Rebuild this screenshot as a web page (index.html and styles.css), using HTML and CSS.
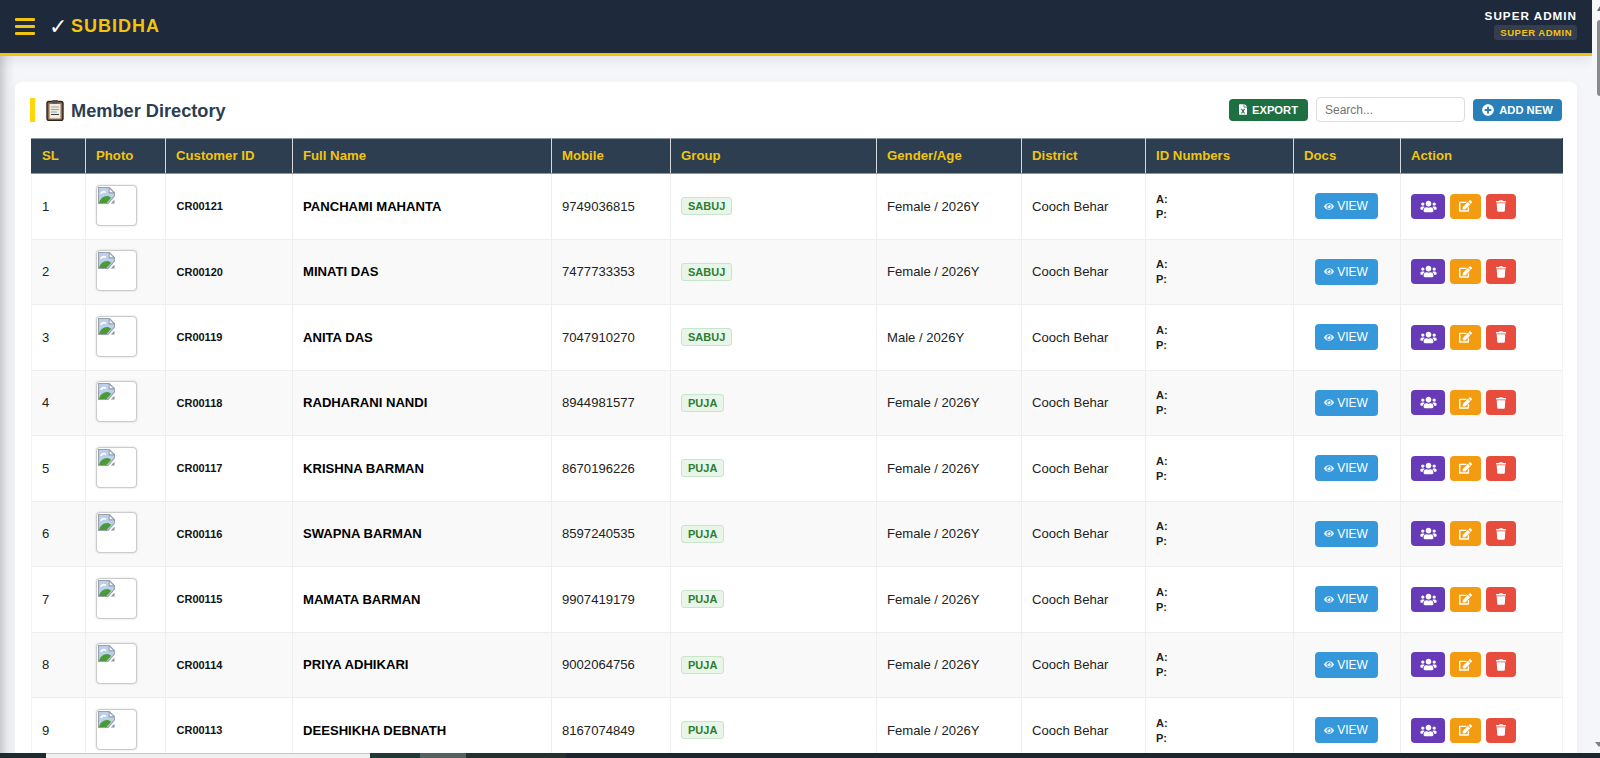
FILE: index.html
```html
<!DOCTYPE html>
<html lang="en">
<head>
<meta charset="utf-8">
<title>Subidha - Member Directory</title>
<link rel="stylesheet" href="styles.css">
</head>
<body>
<svg class="defs" aria-hidden="true">
  <symbol id="i-users" viewBox="0 0 640 512"><path d="M96 224c35.3 0 64-28.7 64-64s-28.7-64-64-64-64 28.7-64 64 28.7 64 64 64zm448 0c35.3 0 64-28.7 64-64s-28.7-64-64-64-64 28.7-64 64 28.7 64 64 64zm32 32h-64c-17.6 0-33.5 7.1-45.1 18.6 40.3 22.1 68.9 62 75.1 109.4h66c17.7 0 32-14.3 32-32v-32c0-35.3-28.7-64-64-64zm-256 0c61.9 0 112-50.1 112-112S381.9 32 320 32 208 82.1 208 144s50.1 112 112 112zm76.8 32h-8.3c-20.8 10-43.9 16-68.5 16s-47.6-6-68.5-16h-8.3C179.6 288 128 339.6 128 403.2V432c0 26.5 21.5 48 48 48h288c26.5 0 48-21.5 48-48v-28.8c0-63.6-51.6-115.2-115.2-115.2zm-223.7-13.4C161.5 263.1 145.6 256 128 256H64c-35.3 0-64 28.7-64 64v32c0 17.7 14.3 32 32 32h65.9c6.3-47.4 34.9-87.3 75.2-109.4z"/></symbol>
  <symbol id="i-edit" viewBox="0 0 576 512"><path d="M402.6 83.2l90.2 90.2c3.8 3.8 3.8 10 0 13.8L274.4 405.6l-92.8 10.3c-12.4 1.4-22.9-9.1-21.5-21.5l10.3-92.8L388.8 83.2c3.8-3.8 10-3.8 13.8 0zm162-22.9l-48.8-48.8c-15.2-15.2-39.9-15.2-55.2 0l-35.4 35.4c-3.8 3.8-3.8 10 0 13.8l90.2 90.2c3.8 3.8 10 3.8 13.8 0l35.4-35.4c15.2-15.3 15.2-40 0-55.2zM384 346.2V448H64V128h229.8c3.2 0 6.2-1.3 8.5-3.5l40-40c7.6-7.6 2.2-20.5-8.5-20.5H48C21.5 64 0 85.5 0 112v352c0 26.5 21.5 48 48 48h352c26.5 0 48-21.5 48-48V306.2c0-10.7-12.9-16-20.5-8.5l-40 40c-2.2 2.3-3.5 5.3-3.5 8.5z"/></symbol>
  <symbol id="i-trash" viewBox="0 0 448 512"><path d="M432 32H312l-9.4-18.7A24 24 0 0 0 281.1 0H166.8a23.72 23.72 0 0 0-21.4 13.3L136 32H16A16 16 0 0 0 0 48v32a16 16 0 0 0 16 16h416a16 16 0 0 0 16-16V48a16 16 0 0 0-16-16zM53.2 467a48 48 0 0 0 47.9 45h245.8a48 48 0 0 0 47.9-45L416 128H32z"/></symbol>
  <symbol id="i-eye" viewBox="0 0 576 512"><path d="M572.52 241.4C518.29 135.59 410.93 64 288 64S57.68 135.64 3.48 241.41a32.35 32.35 0 0 0 0 29.19C57.71 376.41 165.07 448 288 448s230.32-71.64 284.52-177.41a32.35 32.35 0 0 0 0-29.19zM288 400a144 144 0 1 1 144-144 143.93 143.93 0 0 1-144 144zm0-240a95.31 95.31 0 0 0-25.31 3.79 47.85 47.85 0 0 1-66.9 66.9A95.78 95.78 0 1 0 288 160z"/></symbol>
  <symbol id="i-plus" viewBox="0 0 512 512"><path d="M256 8C119 8 8 119 8 256s111 248 248 248 248-111 248-248S393 8 256 8zm144 276c0 6.6-5.4 12-12 12h-92v92c0 6.6-5.4 12-12 12h-56c-6.6 0-12-5.4-12-12v-92h-92c-6.6 0-12-5.4-12-12v-56c0-6.6 5.4-12 12-12h92v-92c0-6.6 5.4-12 12-12h56c6.6 0 12 5.4 12 12v92h92c6.6 0 12 5.4 12 12v56z"/></symbol>
  <symbol id="i-excel" viewBox="0 0 384 512"><path d="M224 136V0H24C10.7 0 0 10.7 0 24v464c0 13.3 10.7 24 24 24h336c13.3 0 24-10.7 24-24V160H248c-13.2 0-24-10.8-24-24zm60.1 106.5L224 336l60.1 93.5c5.1 8-.6 18.5-10.1 18.5h-34.9c-4.4 0-8.5-2.4-10.6-6.3C208.9 405.5 192 373 192 373c-6.4 14.8-10 20-36.6 68.8-2.1 3.9-6.1 6.3-10.5 6.3H110c-9.5 0-15.2-10.5-10.1-18.5l60.3-93.5-60.3-93.5c-5.2-8 .6-18.5 10.1-18.5h34.8c4.4 0 8.5 2.4 10.6 6.3 26.1 48.8 20 33.6 36.6 68.5 0 0 6.1-11.7 36.6-68.5 2.1-3.9 6.2-6.3 10.6-6.3H274c9.5-.1 15.2 10.4 10.1 18.4zM384 121.9v6.1H256V0h6.1c6.4 0 12.5 2.5 17 7l97.9 98c4.5 4.5 7 10.6 7 16.9z"/></symbol>
  <symbol id="i-broken" viewBox="0 0 16 16">
    <path d="M.5.5h10l5 5v3L9.500 15.500h-9z" fill="#bccfeb" stroke="#98a1ac"/>
    <path d="M10.500.5v5h5z" fill="#f4f6f8" stroke="#98a1ac"/>
    <path d="M1 15c.8-4 4-6.800 8.500-6.500l3 1.500-4.500 5z" fill="#4a9a35"/>
    <path d="M2.500 6.500c1-2 3-2.500 5-1.500" stroke="#fff" stroke-width="1.500" fill="none"/>
    <path d="M12 15.500l3.500-3.500v3.500z" fill="#8a939e"/>
  </symbol>
</svg>

<div class="app">
  <header class="topbar">
    <div class="brand">
      <span class="burger"><i></i><i></i><i></i></span>
      <span class="check">✓</span>
      <span class="logo">SUBIDHA</span>
    </div>
    <div class="user">
      <div class="user-name">SUPER ADMIN</div>
      <div class="user-role">SUPER ADMIN</div>
    </div>
  </header>

  <main class="content">
    <section class="card">
      <div class="toolbar">
        <h1 class="title">
          <svg class="clip" viewBox="0 0 18 22" aria-hidden="true">
            <rect x="1" y="2.500" width="16" height="19" rx="2" fill="#8f6d4d" stroke="#2b2320" stroke-width="1.400"/>
            <rect x="3.500" y="5" width="11" height="14.500" fill="#f1ebe0"/>
            <path d="M5 8h8M5 10.500h8M5 13h6" stroke="#9aa3ad" stroke-width="1"/>
            <path d="M5 15.500h8" stroke="#3d434a" stroke-width="1"/>
            <rect x="6" y="1" width="6" height="3.500" rx="1" fill="#55504c"/>
          </svg>
          Member Directory
        </h1>
        <div class="tools">
          <button class="btn btn-export"><svg class="ico-excel"><use href="#i-excel"/></svg>EXPORT</button>
          <input class="search" type="text" placeholder="Search...">
          <button class="btn btn-add"><svg class="ico-plus"><use href="#i-plus"/></svg>ADD NEW</button>
        </div>
      </div>

      <table class="members">
        <thead>
          <tr>
            <th class="c-sl">SL</th><th class="c-photo">Photo</th><th class="c-cid">Customer ID</th><th class="c-name">Full Name</th><th class="c-mobile">Mobile</th><th class="c-group">Group</th><th class="c-gender">Gender/Age</th><th class="c-district">District</th><th class="c-ids">ID Numbers</th><th class="c-docs">Docs</th><th class="c-action">Action</th>
          </tr>
        </thead>
        <tbody>
          <tr><td>1</td><td><span class="photo"><svg><use href="#i-broken"/></svg></span></td><td class="cid">CR00121</td><td class="name">PANCHAMI MAHANTA</td><td>9749036815</td><td><span class="tag">SABUJ</span></td><td>Female / 2026Y</td><td>Cooch Behar</td><td class="ids">A:<br>P:</td><td class="docs"><a class="view"><svg><use href="#i-eye"/></svg>VIEW</a></td><td><div class="acts"><a class="act a-users"><svg><use href="#i-users"/></svg></a><a class="act a-edit"><svg><use href="#i-edit"/></svg></a><a class="act a-del"><svg><use href="#i-trash"/></svg></a></div></td></tr>
          <tr><td>2</td><td><span class="photo"><svg><use href="#i-broken"/></svg></span></td><td class="cid">CR00120</td><td class="name">MINATI DAS</td><td>7477733353</td><td><span class="tag">SABUJ</span></td><td>Female / 2026Y</td><td>Cooch Behar</td><td class="ids">A:<br>P:</td><td class="docs"><a class="view"><svg><use href="#i-eye"/></svg>VIEW</a></td><td><div class="acts"><a class="act a-users"><svg><use href="#i-users"/></svg></a><a class="act a-edit"><svg><use href="#i-edit"/></svg></a><a class="act a-del"><svg><use href="#i-trash"/></svg></a></div></td></tr>
          <tr><td>3</td><td><span class="photo"><svg><use href="#i-broken"/></svg></span></td><td class="cid">CR00119</td><td class="name">ANITA DAS</td><td>7047910270</td><td><span class="tag">SABUJ</span></td><td>Male / 2026Y</td><td>Cooch Behar</td><td class="ids">A:<br>P:</td><td class="docs"><a class="view"><svg><use href="#i-eye"/></svg>VIEW</a></td><td><div class="acts"><a class="act a-users"><svg><use href="#i-users"/></svg></a><a class="act a-edit"><svg><use href="#i-edit"/></svg></a><a class="act a-del"><svg><use href="#i-trash"/></svg></a></div></td></tr>
          <tr><td>4</td><td><span class="photo"><svg><use href="#i-broken"/></svg></span></td><td class="cid">CR00118</td><td class="name">RADHARANI NANDI</td><td>8944981577</td><td><span class="tag">PUJA</span></td><td>Female / 2026Y</td><td>Cooch Behar</td><td class="ids">A:<br>P:</td><td class="docs"><a class="view"><svg><use href="#i-eye"/></svg>VIEW</a></td><td><div class="acts"><a class="act a-users"><svg><use href="#i-users"/></svg></a><a class="act a-edit"><svg><use href="#i-edit"/></svg></a><a class="act a-del"><svg><use href="#i-trash"/></svg></a></div></td></tr>
          <tr><td>5</td><td><span class="photo"><svg><use href="#i-broken"/></svg></span></td><td class="cid">CR00117</td><td class="name">KRISHNA BARMAN</td><td>8670196226</td><td><span class="tag">PUJA</span></td><td>Female / 2026Y</td><td>Cooch Behar</td><td class="ids">A:<br>P:</td><td class="docs"><a class="view"><svg><use href="#i-eye"/></svg>VIEW</a></td><td><div class="acts"><a class="act a-users"><svg><use href="#i-users"/></svg></a><a class="act a-edit"><svg><use href="#i-edit"/></svg></a><a class="act a-del"><svg><use href="#i-trash"/></svg></a></div></td></tr>
          <tr><td>6</td><td><span class="photo"><svg><use href="#i-broken"/></svg></span></td><td class="cid">CR00116</td><td class="name">SWAPNA BARMAN</td><td>8597240535</td><td><span class="tag">PUJA</span></td><td>Female / 2026Y</td><td>Cooch Behar</td><td class="ids">A:<br>P:</td><td class="docs"><a class="view"><svg><use href="#i-eye"/></svg>VIEW</a></td><td><div class="acts"><a class="act a-users"><svg><use href="#i-users"/></svg></a><a class="act a-edit"><svg><use href="#i-edit"/></svg></a><a class="act a-del"><svg><use href="#i-trash"/></svg></a></div></td></tr>
          <tr><td>7</td><td><span class="photo"><svg><use href="#i-broken"/></svg></span></td><td class="cid">CR00115</td><td class="name">MAMATA BARMAN</td><td>9907419179</td><td><span class="tag">PUJA</span></td><td>Female / 2026Y</td><td>Cooch Behar</td><td class="ids">A:<br>P:</td><td class="docs"><a class="view"><svg><use href="#i-eye"/></svg>VIEW</a></td><td><div class="acts"><a class="act a-users"><svg><use href="#i-users"/></svg></a><a class="act a-edit"><svg><use href="#i-edit"/></svg></a><a class="act a-del"><svg><use href="#i-trash"/></svg></a></div></td></tr>
          <tr><td>8</td><td><span class="photo"><svg><use href="#i-broken"/></svg></span></td><td class="cid">CR00114</td><td class="name">PRIYA ADHIKARI</td><td>9002064756</td><td><span class="tag">PUJA</span></td><td>Female / 2026Y</td><td>Cooch Behar</td><td class="ids">A:<br>P:</td><td class="docs"><a class="view"><svg><use href="#i-eye"/></svg>VIEW</a></td><td><div class="acts"><a class="act a-users"><svg><use href="#i-users"/></svg></a><a class="act a-edit"><svg><use href="#i-edit"/></svg></a><a class="act a-del"><svg><use href="#i-trash"/></svg></a></div></td></tr>
          <tr><td>9</td><td><span class="photo"><svg><use href="#i-broken"/></svg></span></td><td class="cid">CR00113</td><td class="name">DEESHIKHA DEBNATH</td><td>8167074849</td><td><span class="tag">PUJA</span></td><td>Female / 2026Y</td><td>Cooch Behar</td><td class="ids">A:<br>P:</td><td class="docs"><a class="view"><svg><use href="#i-eye"/></svg>VIEW</a></td><td><div class="acts"><a class="act a-users"><svg><use href="#i-users"/></svg></a><a class="act a-edit"><svg><use href="#i-edit"/></svg></a><a class="act a-del"><svg><use href="#i-trash"/></svg></a></div></td></tr>
        </tbody>
      </table>
    </section>
  </main>
</div>

<div class="scrollbar"><span class="sb-arrow"></span><span class="sb-thumb"></span><span class="sb-arrow-down"></span></div>
<div class="strip"><span class="s1"></span><span class="s2"></span><span class="s3"></span><span class="s4"></span><span class="s5"></span></div>
</body>
</html>
```

FILE: styles.css
```css
* { box-sizing: border-box; }
html, body { margin: 0; height: 100%; overflow: hidden; }
body {
  position: relative;
  width: 1600px;
  height: 758px;
  background: #f4f6f9;
  font-family: "Liberation Sans", Arial, sans-serif;
  color: #212529;
}
.defs { display: none; }

.app { width: 1592px; height: 758px; overflow: hidden; }

.topbar {
  height: 56px;
  background: #1e293b;
  border-bottom: 3px solid #f1c40f;
  box-shadow: 0 4px 12px rgba(0, 0, 0, .08);
  display: flex;
  justify-content: space-between;
  align-items: center;
  padding: 0 15px;
  position: relative;
  z-index: 2;
}
.brand { display: flex; align-items: center; }
.burger { width: 20px; display: flex; flex-direction: column; gap: 4px; margin-right: 14px; }
.burger i { display: block; height: 3px; background: #f1c40f; border-radius: 1px; }
.check { color: #fff; font: bold 22px "DejaVu Sans", sans-serif; width: 22px; }
.logo { color: #f1c40f; font-weight: 700; font-size: 18px; letter-spacing: 1px; }
.user { display: flex; flex-direction: column; align-items: flex-end; gap: 2px; margin-top: -4px; }
.user-name { color: #fff; font-size: 11.700px; font-weight: 700; letter-spacing: 1px; line-height: 14px; }
.user-role {
  color: #f1c40f;
  background: rgba(255, 255, 255, .1);
  font-size: 9.500px;
  font-weight: 700;
  letter-spacing: .5px;
  line-height: 15px;
  padding: 0 5px 0 6px;
  border-radius: 3px;
}

.content {
  height: 702px;
  padding: 26px 15px 0;
  background: linear-gradient(90deg, #c9cbce 0, #e9ebee 8px, #f4f6f9 15px);
}
.card {
  width: 1562px;
  background: #fff;
  border-radius: 6px;
  padding: 15px 15px 0 16px;
  box-shadow: 0 2px 10px rgba(0, 0, 0, .05);
}
.toolbar { height: 41px; display: flex; justify-content: space-between; align-items: flex-start; }
.title {
  margin: 1px 0 0 -1px;
  height: 24px;
  border-left: 5px solid #ffd60a;
  padding: 2px 0 0 11px;
  display: flex;
  align-items: center;
  gap: 7px;
  font-size: 18.200px;
  font-weight: 700;
  color: #2c3e50;
}
.clip { width: 18px; height: 22px; margin-top: -2px; }
.tools { display: flex; align-items: center; gap: 8px; height: 25px; }
.btn {
  border: 0;
  height: 22px;
  border-radius: 4px;
  color: #fff;
  font: 700 11.200px "Liberation Sans", Arial, sans-serif;
  display: inline-flex;
  align-items: center;
  justify-content: center;
  padding: 0;
  fill: #fff;
}
.btn-export { width: 79px; background: #1e6f42; gap: 5px; }
.btn-add { width: 89px; background: #2980b9; gap: 5px; }
.ico-excel { width: 8px; height: 11px; }
.ico-plus { width: 12px; height: 12px; }
.search {
  width: 149px;
  height: 25px;
  border: 1px solid #ddd;
  border-radius: 4px;
  padding: 0 8px;
  font: 12px "Liberation Sans", Arial, sans-serif;
  background: #fff;
}
.search::placeholder { color: #757575; }

.members {
  width: 1531px;
  table-layout: fixed;
  border-collapse: collapse;
  font-size: 13.100px;
}
.members th {
  height: 35px;
  background: #2c3e50;
  color: #f1c40f;
  font-size: 13.200px;
  font-weight: 700;
  text-align: left;
  padding: 0 10px 2px;
  border: 1px solid #d5d9dd;
  border-top-color: #8896a3;
  border-bottom-color: #8896a3;
}
.members th:first-child { border-left-color: #2c3e50; }
.members th:last-child { border-right-color: #2c3e50; }
.c-sl { width: 54px; }
.c-photo { width: 80px; }
.c-cid { width: 127px; }
.c-name { width: 259px; }
.c-mobile { width: 119px; }
.c-group { width: 206px; }
.c-gender { width: 145px; }
.c-district { width: 124px; }
.c-ids { width: 148px; }
.c-docs { width: 107px; }
.c-action { width: 162px; }

.members td {
  height: 65.500px;
  padding: 0 10px;
  border: 1px solid #eee;
  vertical-align: middle;
  color: #222;
}
.members td:first-child { border-left-color: #f4f4f4; }
.members td:last-child { border-right-color: #f4f4f4; }
.members tbody tr:nth-child(even) td { background: #f9f9f9; }
.members .cid { font-size: 11px; font-weight: 700; color: #111; padding-left: 10.500px; }
.members .name { font-size: 13.100px; font-weight: 700; color: #000; }
.members .ids { font-size: 11px; font-weight: 700; line-height: 15px; padding-top: 1px; }
.members .docs { text-align: center; padding: 0 11px 0 9px; }

.photo {
  display: block;
  width: 41px;
  height: 41px;
  margin-bottom: 2px;
  border: 1px solid #ccc;
  border-radius: 4px;
  box-shadow: 0 0 2px rgba(0, 0, 0, .2);
  background: #fff;
  padding: 1px;
}
.photo svg { display: block; width: 17px; height: 17px; }

.tag {
  display: inline-block;
  background: #e8f5e9;
  border: 1px solid #c8e6c9;
  border-radius: 3px;
  color: #2e7d32;
  font-size: 11px;
  font-weight: 700;
  line-height: 16px;
  padding: 0 6px;
}

.view {
  display: inline-flex;
  align-items: center;
  justify-content: center;
  gap: 3px;
  width: 63px;
  height: 26px;
  background: #3498db;
  border-radius: 4px;
  color: #fff;
  fill: #fff;
  font-size: 12px;
}
.view svg { width: 10px; height: 9px; opacity: .85; }

.acts { display: flex; gap: 5px; }
.act {
  height: 25px;
  border-radius: 4px;
  display: flex;
  align-items: center;
  justify-content: center;
  fill: #fff;
}
.a-users { width: 34px; background: #673ab7; }
.a-users svg { width: 17px; height: 13px; }
.a-edit { width: 31px; background: #f39c12; }
.a-edit svg { width: 13px; height: 12px; }
.a-del { width: 30px; background: #e74c3c; }
.a-del svg { width: 10px; height: 12px; }

.scrollbar { position: absolute; top: 0; right: 0; width: 8px; height: 758px; background: #f4f6f9; overflow: hidden; }
.sb-arrow {
  position: absolute; top: 6px; left: 5px;
  border: 3.500px solid transparent; border-top: 0; border-bottom: 5px solid #666;
}
.sb-thumb { position: absolute; top: 20px; left: 5px; width: 3px; height: 76px; background: #8a8a8a; border-radius: 3px 0 0 3px; }
.sb-arrow-down {
  position: absolute; bottom: 11px; left: 3px;
  border: 4px solid transparent; border-bottom: 0; border-top: 5px solid #808080;
}

.strip { position: absolute; left: 0; right: 0; bottom: 0; height: 5px; display: flex; background: #1b2730; z-index: 5; }
.s1 { width: 46px; background: #1c2b30; }
.s2 { width: 324px; background: #efefef; border-top: 1px solid #c8c8c8; }
.s3 { width: 50px; background: #1f3a36; }
.s4 { width: 46px; background: #52635f; }
.s5 { width: 100px; background: #23322e; }
```
